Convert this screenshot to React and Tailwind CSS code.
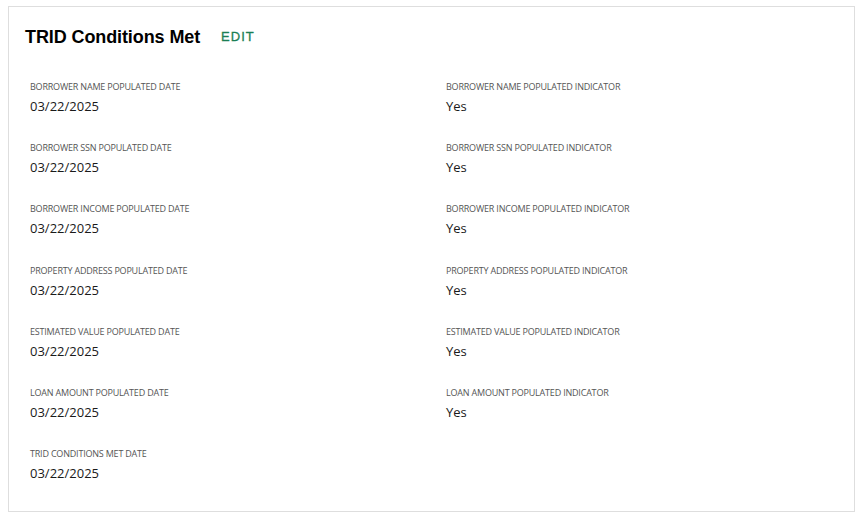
import React from 'react';

const fields = [
  ['BORROWER NAME POPULATED DATE', '03/22/2025', 'BORROWER NAME POPULATED INDICATOR', 'Yes'],
  ['BORROWER SSN POPULATED DATE', '03/22/2025', 'BORROWER SSN POPULATED INDICATOR', 'Yes'],
  ['BORROWER INCOME POPULATED DATE', '03/22/2025', 'BORROWER INCOME POPULATED INDICATOR', 'Yes'],
  ['PROPERTY ADDRESS POPULATED DATE', '03/22/2025', 'PROPERTY ADDRESS POPULATED INDICATOR', 'Yes'],
  ['ESTIMATED VALUE POPULATED DATE', '03/22/2025', 'ESTIMATED VALUE POPULATED INDICATOR', 'Yes'],
  ['LOAN AMOUNT POPULATED DATE', '03/22/2025', 'LOAN AMOUNT POPULATED INDICATOR', 'Yes'],
  ['TRID CONDITIONS MET DATE', '03/22/2025'],
];

// Single label/value pair
const Field = ({ label, value }) => (
  <div className="flex flex-col gap-[2px]">
    <div className="text-[9px] leading-[14px] text-[#555555] tracking-[-0.2px]">{label}</div>
    <div className="text-[13px] leading-[20px] text-[#1a1a1a]">{value}</div>
  </div>
);

export default function App() {
  return (
    <div className="bg-white w-[861px] h-[520px] pt-[6px] pl-2 pr-[6px] font-['Open_Sans',sans-serif]">
      <div className="border border-[#dedede] h-[506px] px-4 pt-4">
        {/* Header */}
        <div className="flex items-center h-[28px]">
          <h2 className="font-['Liberation_Sans',Arial,sans-serif] font-bold text-[18px] leading-[28px] text-black tracking-[-0.1px]">
            TRID Conditions Met
          </h2>
          <button className="ml-[21px] font-['Liberation_Sans',Arial,sans-serif] text-[13px] tracking-[1px] text-[#1b7f55] [-webkit-text-stroke:0.3px_#1b7f55]">
            EDIT
          </button>
        </div>

        {/* Fields */}
        <div className="mt-[29px] px-[5px] grid grid-cols-[416px_1fr] gap-y-[25.2px]">
          {fields.map(([l1, v1, l2, v2]) => (
            <React.Fragment key={l1}>
              <Field label={l1} value={v1} />
              {l2 ? <Field label={l2} value={v2} /> : <div />}
            </React.Fragment>
          ))}
        </div>
      </div>
    </div>
  );
}
